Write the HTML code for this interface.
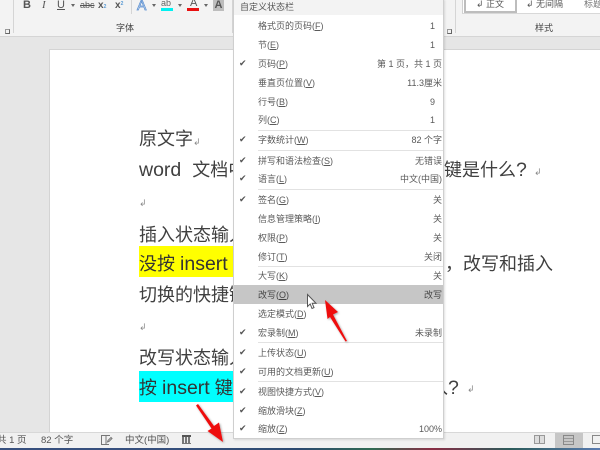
<!DOCTYPE html>
<html><head><meta charset="utf-8">
<style>
html,body{margin:0;padding:0}
body{width:600px;height:450px;overflow:hidden;position:relative;background:#e6e6e6;font-family:"Liberation Sans","Noto Sans CJK SC",sans-serif;color:#444;filter:blur(.3px)}
.a{position:absolute}
.t{position:absolute;white-space:nowrap;font-size:18px;line-height:26px;left:139px;color:#404040}
.l{font-size:19.5px}
.ret{font-size:9px;color:#888;font-family:"DejaVu Sans",sans-serif}
.m{position:absolute;left:258px;font-size:9px;line-height:14px;color:#5a5a5a;white-space:nowrap}
.v{position:absolute;right:158px;font-size:9px;line-height:14px;color:#5a5a5a;white-space:nowrap}
.c{position:absolute;left:239px;font-size:9px;line-height:14px;color:#555;font-family:"DejaVu Sans",sans-serif}
.s{position:absolute;left:258px;width:185px;height:1px;background:#e2e2e2}
.r{position:absolute;font-size:9px;line-height:10px;color:#888;font-family:"DejaVu Sans",sans-serif}
u{text-decoration:underline}
</style></head><body>
<div class="a" style="left:0;top:0;width:600px;height:37px;background:#f3f3f3;border-bottom:1px solid #d5d5d5;box-sizing:border-box"></div>
<div class="a" style="left:13px;top:0;width:1px;height:33px;background:#d5d5d5"></div>
<div class="a" style="left:23px;top:0;font-size:11px;font-weight:bold;line-height:11px;color:#555">B</div>
<div class="a" style="left:42px;top:0;font-size:11px;font-style:italic;line-height:11px;color:#555;font-family:'Liberation Serif',serif">I</div>
<div class="a" style="left:57px;top:0;font-size:11px;line-height:11px;color:#555;text-decoration:underline">U</div>
<div class="a" style="left:71px;top:4px;border:2px solid transparent;border-top:3px solid #666"></div>
<div class="a" style="left:80px;top:0;font-size:9px;line-height:11px;color:#555;text-decoration:line-through">abc</div>
<div class="a" style="left:98px;top:0;font-size:10px;font-weight:bold;line-height:11px;color:#555">x<span style="font-size:5px;color:#5b9bd5">2</span></div>
<div class="a" style="left:115px;top:0;font-size:10px;font-weight:bold;line-height:9px;color:#555">x<span style="font-size:5px;color:#5b9bd5;vertical-align:3px">2</span></div>
<div class="a" style="left:131px;top:0;width:1px;height:14px;background:#d5d5d5"></div>
<div class="a" style="left:137px;top:-2px;font-size:14px;line-height:14px;color:#fff;-webkit-text-stroke:.8px #5b8fd0">A</div>
<div class="a" style="left:152px;top:4px;border:2px solid transparent;border-top:3px solid #666"></div>
<div class="a" style="left:161px;top:-2px;font-size:9px;line-height:10px;color:#666">ab</div>
<div class="a" style="left:161px;top:8px;width:12px;height:3px;background:#00f0f0"></div>
<div class="a" style="left:178px;top:4px;border:2px solid transparent;border-top:3px solid #666"></div>
<div class="a" style="left:190px;top:-2px;font-size:11px;line-height:11px;color:#555">A</div>
<div class="a" style="left:187px;top:8px;width:12px;height:3px;background:#e81010"></div>
<div class="a" style="left:204px;top:4px;border:2px solid transparent;border-top:3px solid #666"></div>
<div class="a" style="left:213px;top:0;width:11px;height:11px;background:#bdbdbd;color:#555;font-size:11px;line-height:11px;text-align:center;font-weight:bold">A</div>
<div class="a" style="left:116px;top:22px;font-size:9px;line-height:12px;color:#444">字体</div>
<div class="a" style="left:5px;top:29px;width:3px;height:3px;border-left:1px solid #999;border-top:1px solid #999;border-right:1px solid #666;border-bottom:1px solid #666"></div>
<div class="a" style="left:232px;top:0;width:1px;height:33px;background:#d5d5d5"></div>

<div class="a" style="left:462px;top:0;width:138px;height:14px;background:#fff;border-left:1px solid #d0d0d0;border-bottom:1px solid #d8d8d8;box-sizing:border-box"></div>
<div class="a" style="left:464px;top:-4px;width:53px;height:17px;background:#fff;border:2px solid #bdbdbd;box-sizing:border-box"></div>
<div class="a" style="left:476px;top:-2px;font-size:9px;line-height:13px;color:#555;white-space:nowrap">↲ 正文</div>
<div class="a" style="left:526px;top:-2px;font-size:9px;line-height:13px;color:#555;white-space:nowrap">↲ 无间隔</div>
<div class="a" style="left:584px;top:-2px;font-size:9px;line-height:13px;color:#777;white-space:nowrap">标题</div>
<div class="a" style="left:535px;top:22px;font-size:9px;line-height:12px;color:#444">样式</div>
<div class="a" style="left:447px;top:29px;width:3px;height:3px;border-left:1px solid #999;border-top:1px solid #999;border-right:1px solid #666;border-bottom:1px solid #666"></div>
<div class="a" style="left:455px;top:0;width:1px;height:33px;background:#d5d5d5"></div>

<div class="a" style="left:50px;top:50px;width:550px;height:382px;background:#fff;box-shadow:0 0 0 1px #d4d4d4"></div>

<div class="t" style="top:126px">原文字<span class="ret">↲</span></div>
<div class="t" style="top:157px"><span class="l">word</span><span style="margin-left:11px">文档中</span></div>
<div class="t" style="top:157px;left:444px">键是什么<span class="l">?</span></div>
<div class="r" style="left:534px;top:168px">↲</div>
<div class="r" style="left:139px;top:199px">↲</div>
<div class="t" style="top:222px">插入状态输入</div>
<div class="a" style="left:139px;top:246px;width:94px;height:31px;background:#ffff00"></div>
<div class="t" style="top:251px;color:#333">没按 <span class="l">insert</span></div>
<div class="t" style="top:251px;left:445px">，改写和插入</div>
<div class="t" style="top:282px">切换的快捷键</div>
<div class="r" style="left:139px;top:323px">↲</div>
<div class="t" style="top:345px">改写状态输入</div>
<div class="a" style="left:139px;top:371px;width:94px;height:31px;background:#00ffff"></div>
<div class="t" style="top:375px;color:#333">按 <span class="l">insert</span> 键</div>
<div class="t" style="top:375px;left:430px">入<span class="l">?</span></div>
<div class="r" style="left:467px;top:385px">↲</div>

<div class="a" style="left:0;top:432px;width:600px;height:16px;background:#f1f1f1;border-top:1px solid #d8d8d8;box-sizing:border-box"></div>
<div class="a" style="left:0;top:448px;width:600px;height:2px;background:linear-gradient(90deg,#37507e 0,#37507e 25%,#2c4a70 50%,#2f6a52 62%,#8a2d45 72%,#2c5b5a 85%,#5a7bb0 100%)"></div>
<div class="a" style="left:-3px;top:433px;font-size:9.500px;line-height:15px;color:#555;white-space:nowrap">共 1 页</div>
<div class="a" style="left:41px;top:433px;font-size:9.500px;line-height:15px;color:#555;white-space:nowrap">82 个字</div>
<svg class="a" style="left:100px;top:434px" width="13" height="12" viewBox="0 0 13 12"><path d="M1.500 1.500H6V10.500H1.500ZM6 1.500H10M6 10.500H9M11 3.500L8 6.500L7.500 8L9 7.500L12 4.500Z" fill="none" stroke="#777" stroke-width="1"/></svg>
<div class="a" style="left:125px;top:433px;font-size:9.500px;line-height:15px;color:#555;white-space:nowrap">中文(中国)</div>
<div class="a" style="left:182px;top:435px;width:9px;height:9px;border-top:2px solid #555;border-bottom:1px solid #777;background:repeating-linear-gradient(90deg,#777 0 2px,#eee 2px 3px);box-sizing:border-box"></div>
<div class="a" style="left:534px;top:435px;width:11px;height:9px;border:1px solid #999;box-sizing:border-box;background:linear-gradient(90deg,#ddd 45%,#888 45% 55%,#ddd 55%)"></div>
<div class="a" style="left:555px;top:433px;width:28px;height:15px;background:#c6c6c6"></div>
<div class="a" style="left:563px;top:435px;width:11px;height:10px;border:1px solid #888;box-sizing:border-box;background:repeating-linear-gradient(180deg,#c6c6c6 0 2px,#999 2px 3px)"></div>
<div class="a" style="left:592px;top:435px;width:10px;height:9px;border:1px solid #888;box-sizing:border-box"></div>

<div class="a" style="left:233px;top:-1px;width:211px;height:440px;background:#fff;border:1px solid #cfcfcf;box-sizing:border-box;box-shadow:1px 1px 2px rgba(0,0,0,.12)"></div>
<div class="a" style="left:234px;top:0;width:209px;height:15px;background:#f3f3f3"></div>
<div class="a" style="left:240px;top:0;font-size:9px;line-height:14px;color:#555;white-space:nowrap">自定义状态栏</div>
<div class="a" style="left:234px;top:285px;width:209px;height:19px;background:#c6c6c6"></div>

<div class="m" style="top:19px">格式页的页码(<u>F</u>)</div><div class="v" style="top:19px;right:165px">1</div>
<div class="m" style="top:38px">节(<u>E</u>)</div><div class="v" style="top:38px;right:165px">1</div>
<div class="c" style="top:57px">✔</div><div class="m" style="top:57px">页码(<u>P</u>)</div><div class="v" style="top:57px">第 1 页，共 1 页</div>
<div class="m" style="top:76px">垂直页位置(<u>V</u>)</div><div class="v" style="top:76px">11.3厘米</div>
<div class="m" style="top:95px">行号(<u>B</u>)</div><div class="v" style="top:95px;right:165px">9</div>
<div class="m" style="top:113px">列(<u>C</u>)</div><div class="v" style="top:113px;right:165px">1</div>
<div class="s" style="top:130px"></div>
<div class="c" style="top:133px">✔</div><div class="m" style="top:133px">字数统计(<u>W</u>)</div><div class="v" style="top:133px">82 个字</div>
<div class="s" style="top:150px"></div>
<div class="c" style="top:154px">✔</div><div class="m" style="top:154px">拼写和语法检查(<u>S</u>)</div><div class="v" style="top:154px">无错误</div>
<div class="c" style="top:172px">✔</div><div class="m" style="top:172px">语言(<u>L</u>)</div><div class="v" style="top:172px">中文(中国)</div>
<div class="s" style="top:189px"></div>
<div class="c" style="top:193px">✔</div><div class="m" style="top:193px">签名(<u>G</u>)</div><div class="v" style="top:193px">关</div>
<div class="m" style="top:212px">信息管理策略(<u>I</u>)</div><div class="v" style="top:212px">关</div>
<div class="m" style="top:231px">权限(<u>P</u>)</div><div class="v" style="top:231px">关</div>
<div class="m" style="top:250px">修订(<u>T</u>)</div><div class="v" style="top:250px">关闭</div>
<div class="s" style="top:266px"></div>
<div class="m" style="top:269px">大写(<u>K</u>)</div><div class="v" style="top:269px">关</div>
<div class="m" style="top:288px;color:#444">改写(<u>O</u>)</div><div class="v" style="top:288px;color:#444">改写</div>
<div class="m" style="top:307px">选定模式(<u>D</u>)</div>
<div class="c" style="top:326px">✔</div><div class="m" style="top:326px">宏录制(<u>M</u>)</div><div class="v" style="top:326px">未录制</div>
<div class="s" style="top:342px"></div>
<div class="c" style="top:346px">✔</div><div class="m" style="top:346px">上传状态(<u>U</u>)</div>
<div class="c" style="top:365px">✔</div><div class="m" style="top:365px">可用的文档更新(<u>U</u>)</div>
<div class="s" style="top:381px"></div>
<div class="c" style="top:385px">✔</div><div class="m" style="top:385px">视图快捷方式(<u>V</u>)</div>
<div class="c" style="top:404px">✔</div><div class="m" style="top:404px">缩放滑块(<u>Z</u>)</div>
<div class="c" style="top:422px">✔</div><div class="m" style="top:422px">缩放(<u>Z</u>)</div><div class="v" style="top:422px">100%</div>

<svg class="a" style="left:0;top:0" width="600" height="450" viewBox="0 0 600 450">
<defs><filter id="sh" x="-30%" y="-30%" width="160%" height="160%"><feDropShadow dx="1" dy="1" stdDeviation="1" flood-color="#000" flood-opacity=".35"/></filter></defs>
<path d="M307.500 294.500V306.500L310.200 304L312 308.500L314 307.600L312.200 303.300H316Z" fill="#fff" stroke="#555" stroke-width="1"/>
<path d="M325 300L338 312L333 314.500L347 341L345.500 341.500L330 317L327.500 319Z" fill="#ee1111" filter="url(#sh)"/>
<path d="M196 405.500L198 404L214 426L219 422.500L223 442L207.500 431L211.500 428.500Z" fill="#ee1111" filter="url(#sh)"/>
</svg>
</body></html>
